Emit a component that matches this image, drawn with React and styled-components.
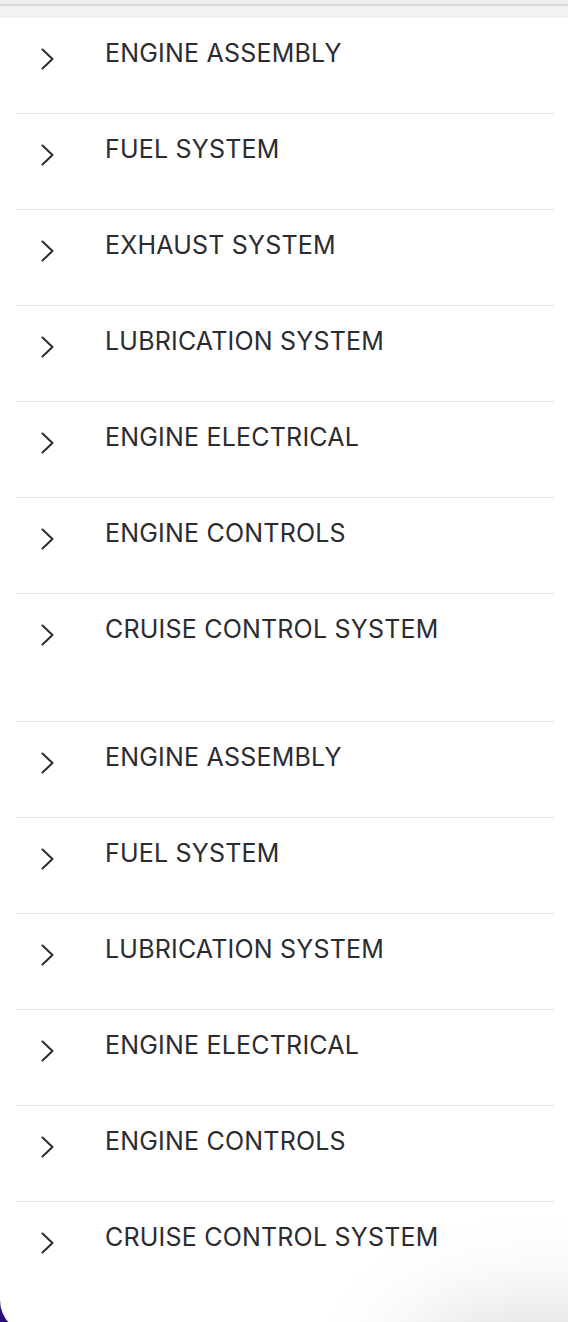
import React from 'react';
import styled, { createGlobalStyle } from 'styled-components';

const GlobalStyle = createGlobalStyle`
  html, body {
    margin: 0;
    padding: 0;
    background: #2b0f78;
    overflow: hidden;
  }
  body {
    font-family: Inter, "Noto Sans", "Liberation Sans", sans-serif;
  }
`;

const groups = [
  ['ENGINE ASSEMBLY', 'FUEL SYSTEM', 'EXHAUST SYSTEM', 'LUBRICATION SYSTEM', 'ENGINE ELECTRICAL', 'ENGINE CONTROLS', 'CRUISE CONTROL SYSTEM'],
  ['ENGINE ASSEMBLY', 'FUEL SYSTEM', 'LUBRICATION SYSTEM', 'ENGINE ELECTRICAL', 'ENGINE CONTROLS', 'CRUISE CONTROL SYSTEM'],
];

const Chevron = () => (
  <svg width="15" height="24" viewBox="0 0 15 24" fill="none">
    <polyline points="2.5,2.5 12.5,12 2.5,21.5" stroke="#2b2b2e" strokeWidth="2" strokeLinecap="round" strokeLinejoin="round" />
  </svg>
);

const App = () => {
  return (
    <>
      <GlobalStyle />
      <Panel>
        <TopBar />
        <List>
          {groups.map((items, gi) => (
            <Group key={gi} $spaced={gi < groups.length - 1}>
              {items.map((label, i) => (
                <Item key={i}>
                  <IconCell>
                    <Chevron />
                  </IconCell>
                  <Label>{label}</Label>
                </Item>
              ))}
            </Group>
          ))}
        </List>
        <Shadow />
      </Panel>
    </>
  );
};

export default App;

const Panel = styled.div`
  position: relative;
  background: #ffffff;
  border-bottom-left-radius: 34px;
  padding-bottom: 36px;
  overflow: hidden;
`;

const TopBar = styled.div`
  height: 12px;
  background: #f2f2f2;
  border-top: 4px solid #efefef;
  box-shadow: inset 0 2px 0 #d9d9d9;
  padding-top: 2px;
`;

const List = styled.div`
  padding: 0 14px 0 16px;
`;

const Group = styled.div`
  padding-bottom: ${(p) => (p.$spaced ? '31px' : '0')};
  border-bottom: ${(p) => (p.$spaced ? '1px solid #e6e6e6' : 'none')};
`;

const Item = styled.div`
  display: flex;
  align-items: flex-start;
  height: 96px;
  box-sizing: border-box;
  padding: 23px 0 0 24px;
  border-bottom: 1px solid #e6e6e6;

  &:last-child {
    border-bottom: none;
  }
`;

const IconCell = styled.div`
  width: 65px;
  padding-top: 6px;
  display: flex;
`;

const Label = styled.span`
  font-size: 25px;
  line-height: 24px;
  color: #2c2c30;
  letter-spacing: 0.2px;
`;

const Shadow = styled.div`
  position: absolute;
  left: 440px;
  bottom: -110px;
  width: 400px;
  height: 90px;
  border-radius: 40px;
  box-shadow: 0 0 110px 30px rgba(0, 0, 0, 0.18);
  pointer-events: none;
`;
